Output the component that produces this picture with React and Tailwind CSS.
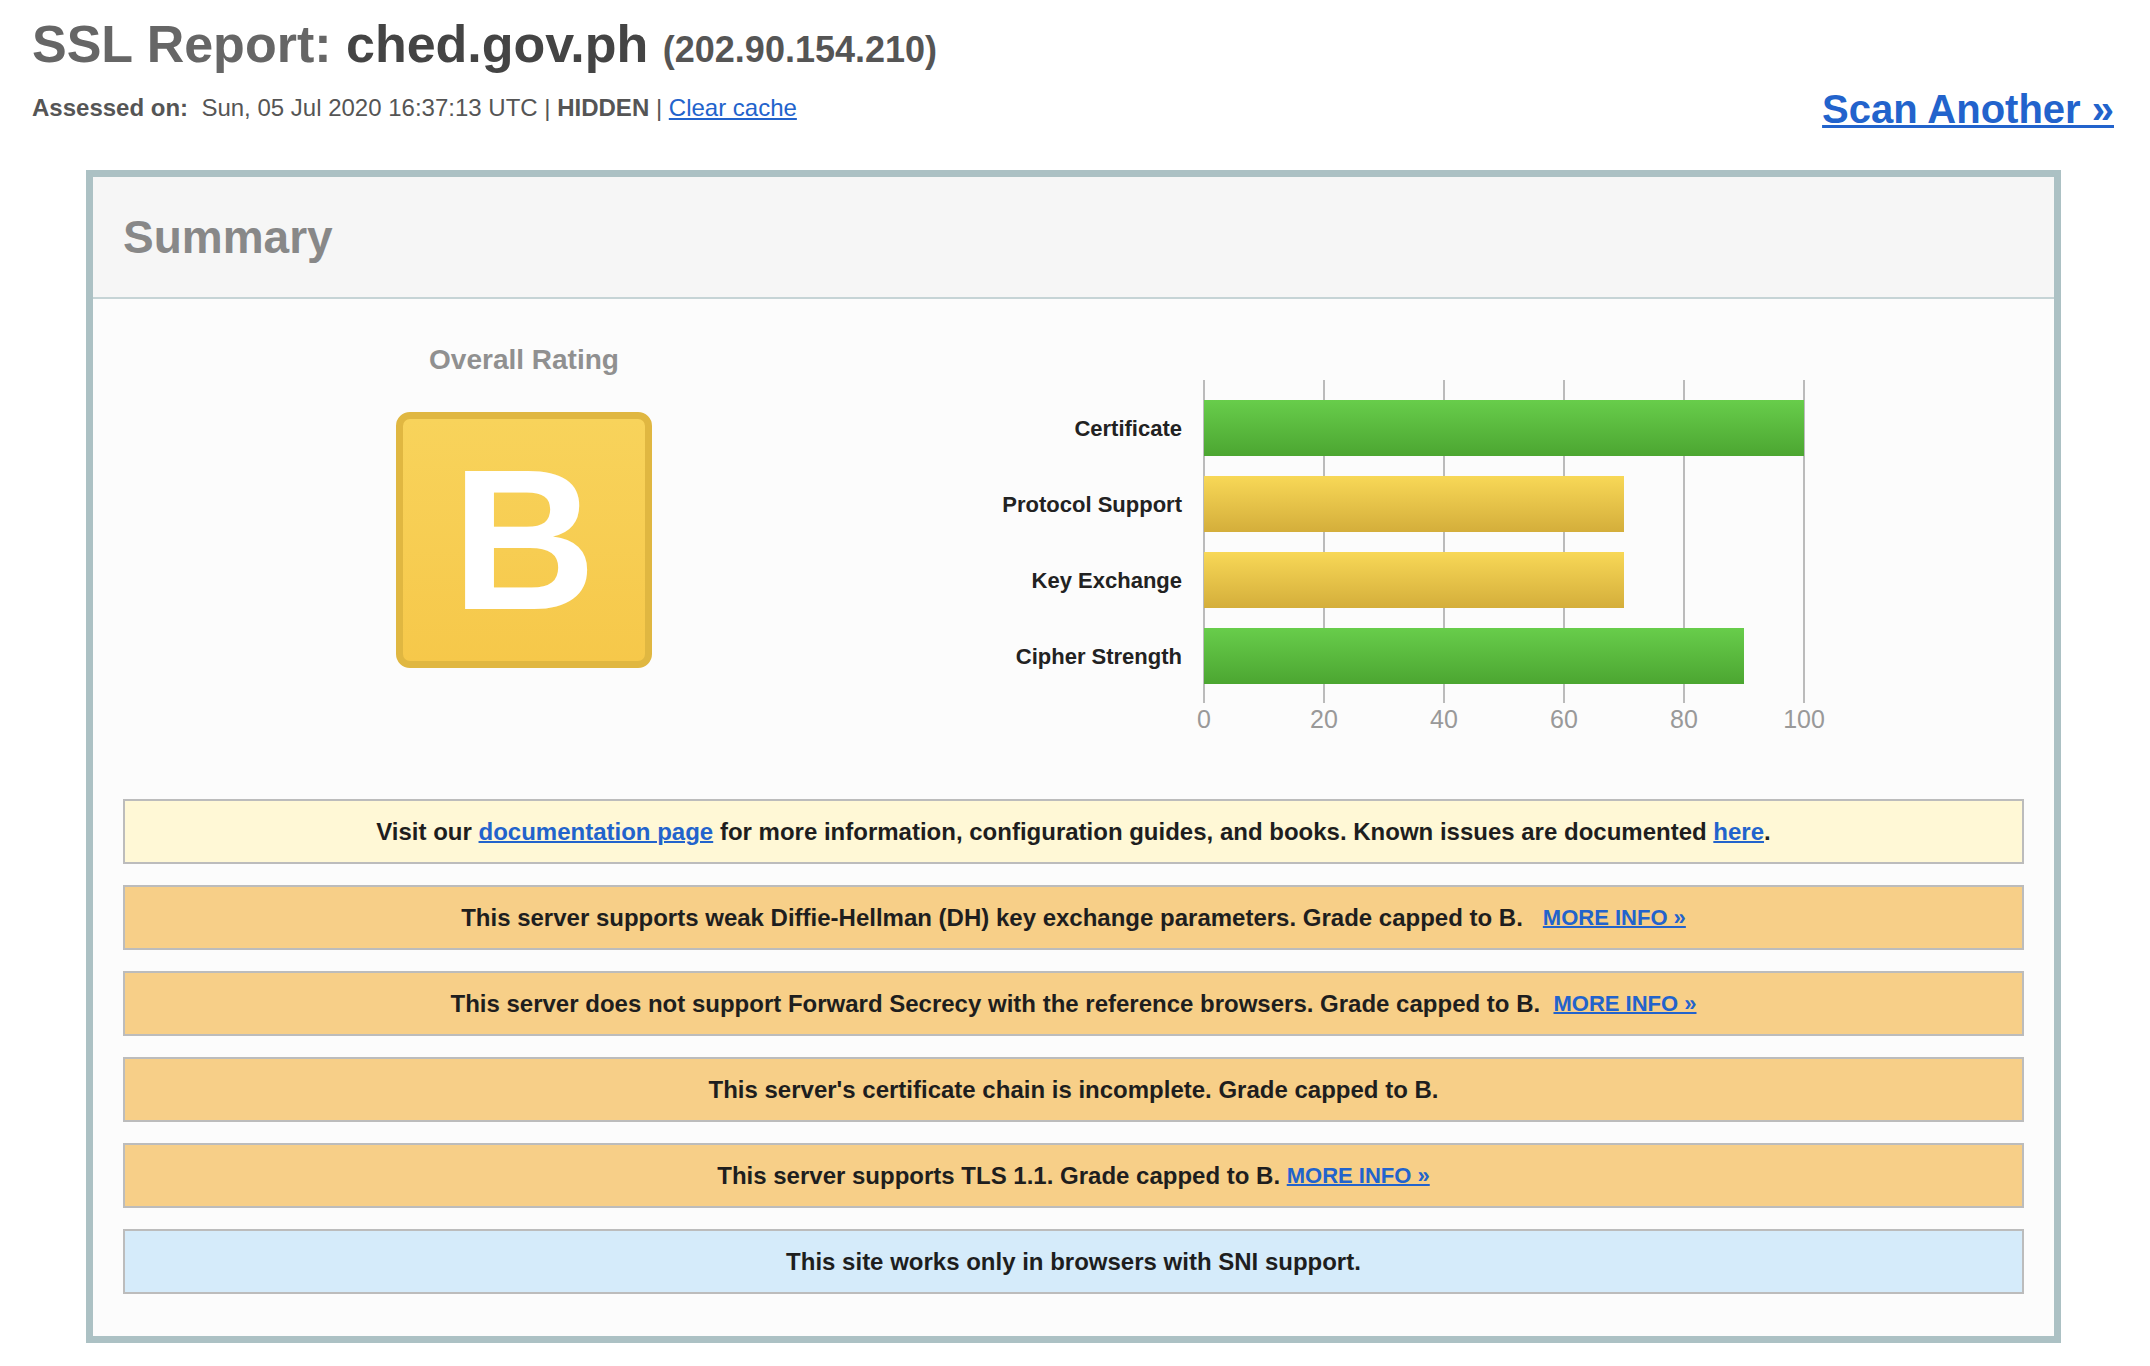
const bars = [
  { label: 'Certificate', value: 100, tone: 'green' },
  { label: 'Protocol Support', value: 70, tone: 'yellow' },
  { label: 'Key Exchange', value: 70, tone: 'yellow' },
  { label: 'Cipher Strength', value: 90, tone: 'green' },
];

const ticks = [0, 20, 40, 60, 80, 100];

function Link({ children, className = '' }) {
  return (
    <a href="#" className={`text-[#2263cc] underline ${className}`}>
      {children}
    </a>
  );
}

function Notice({ tone, children }) {
  const bg = tone === 'info' ? 'bg-[#fff8d6]' : tone === 'sni' ? 'bg-[#d5ebfa]' : 'bg-[#f7cf88]';
  return (
    <div className={`h-[65px] border-2 border-[#bcbcbc] ${bg} flex items-center justify-center text-[24px] font-bold text-[#1e1e1e] whitespace-pre`}>
      {children}
    </div>
  );
}

function MoreInfo() {
  return <Link className="text-[22px] decoration-2">MORE INFO »</Link>;
}

function Chart() {
  return (
    <div className="flex">
      <div className="w-[279px] pr-[22px] flex flex-col pt-[20px] gap-[20px]">
        {bars.map((b) => (
          <div key={b.label} className="h-[56px] flex items-center justify-end text-[22px] font-bold text-[#222]">
            {b.label}
          </div>
        ))}
      </div>
      <div>
        <div className="relative w-[600px] h-[323px]">
          {ticks.map((t) => (
            <div key={t} className="absolute top-0 bottom-0 w-[2px] bg-[#bbbbbb]" style={{ left: t * 6 - 1 }} />
          ))}
          <div className="relative flex flex-col pt-[20px] gap-[20px]">
            {bars.map((b) => (
              <div
                key={b.label}
                className={`h-[56px] bg-linear-to-b ${b.tone === 'green' ? 'from-[#68cd4b] to-[#4ca631]' : 'from-[#f8d857] to-[#d4ae3b]'}`}
                style={{ width: b.value * 6 }}
              />
            ))}
          </div>
        </div>
        <div className="-ml-[30px] w-[660px] mt-[4px] flex justify-between text-[25px] leading-none text-[#999]">
          {ticks.map((t) => (
            <div key={t} className="w-[60px] text-center">{t}</div>
          ))}
        </div>
      </div>
    </div>
  );
}

export default function App() {
  return (
    <div className="bg-white font-['Liberation_Sans',Arial,sans-serif]">
      <div className="flex justify-between pl-[32px] pr-[36px]">
        <div>
          <h1 className="pt-[18px] text-[52px] leading-none font-bold text-[#666]">
            SSL Report: <span className="text-[#444]">ched.gov.ph</span>{' '}
            <span className="text-[36px] text-[#555]">(202.90.154.210)</span>
          </h1>
          <div className="mt-[26px] text-[24px] leading-none text-[#555] whitespace-pre">
            <span className="font-bold">Assessed on:</span>{'  '}Sun, 05 Jul 2020 16:37:13 UTC | <span className="font-bold">HIDDEN</span> | <Link>Clear cache</Link>
          </div>
        </div>
        <Link className="mt-[89px] h-[40px] text-[40px] leading-none font-bold decoration-[3px]">Scan Another »</Link>
      </div>

      <div className="mt-[41px] ml-[86px] w-[1975px] border-[7px] border-[#acc1c4] bg-[#fcfcfc]">
        <div className="h-[122px] bg-[#f6f6f6] border-b-2 border-[#c6d4d6] flex items-center pl-[30px]">
          <h2 className="text-[46px] leading-none font-bold text-[#888]">Summary</h2>
        </div>

        <div className="px-[30px] pt-[47px] pb-[42px]">
          <div className="flex items-start">
            <div className="w-[802px] flex flex-col items-center">
              <div className="text-[28px] leading-none font-bold text-[#909090]">Overall Rating</div>
              <div className="mt-[38px] w-[256px] h-[256px] rounded-[14px] border-[7px] border-[#e0b741] bg-linear-to-b from-[#f8d35b] to-[#f6c84a] flex items-center justify-center">
                <span className="text-[200px] leading-none font-bold text-white">B</span>
              </div>
            </div>
            <div className="mt-[34px]">
              <Chart />
            </div>
          </div>

          <div className="mt-[67px] flex flex-col gap-[21px]">
            <Notice tone="info">
              Visit our <Link className="decoration-2">documentation page</Link> for more information, configuration guides, and books. Known issues are documented <Link className="decoration-2">here</Link>.
            </Notice>
            <Notice tone="warn">
              This server supports weak Diffie-Hellman (DH) key exchange parameters. Grade capped to B.{'   '}<MoreInfo />
            </Notice>
            <Notice tone="warn">
              This server does not support Forward Secrecy with the reference browsers. Grade capped to B.{'  '}<MoreInfo />
            </Notice>
            <Notice tone="warn">This server's certificate chain is incomplete. Grade capped to B.</Notice>
            <Notice tone="warn">
              This server supports TLS 1.1. Grade capped to B. <MoreInfo />
            </Notice>
            <Notice tone="sni">This site works only in browsers with SNI support.</Notice>
          </div>
        </div>
      </div>
    </div>
  );
}
